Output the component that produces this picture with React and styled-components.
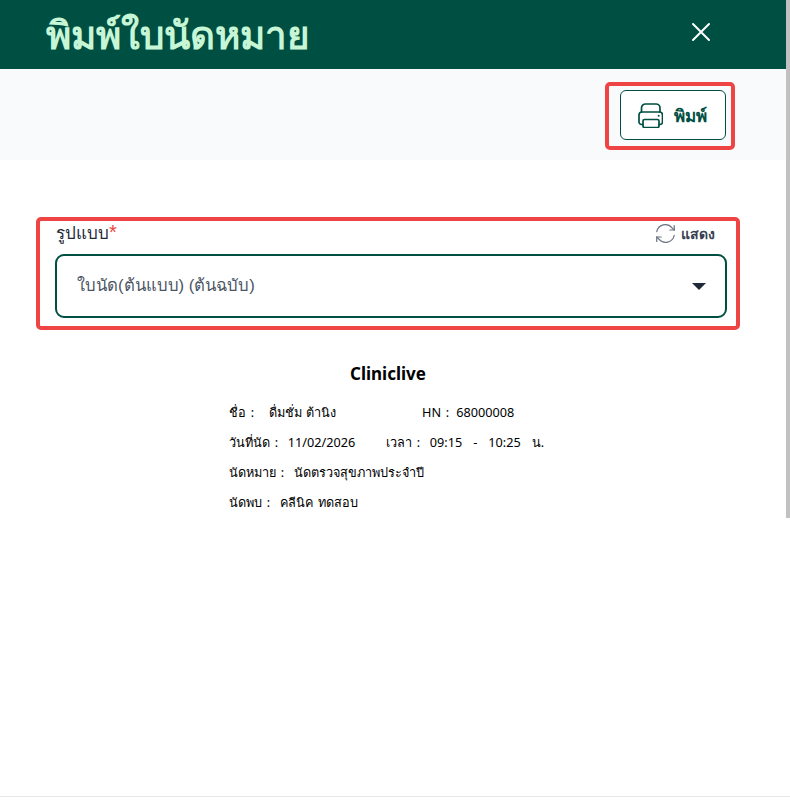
import React from "react";
import styled, { createGlobalStyle } from "styled-components";

const Global = createGlobalStyle`
  html, body { margin: 0; padding: 0; background: #fff; overflow: hidden; }
  body { font-family: "Noto Sans", "Liberation Sans", sans-serif; }
  * { box-sizing: border-box; }
`;
const Page = styled.div`
  position: relative;
  width: 790px;
  height: 805px;
  display: flex;
  flex-direction: column;
  background: #fff;
  overflow: hidden;
`;
const Scrollbar = styled.div`
  position: absolute;
  top: 0;
  right: 0;
  width: 4px;
  height: 518px;
  background: #c1c1c1;
  z-index: 2;
`;
const Header = styled.header`
  height: 69px;
  flex: none;
  background: #004f43;
  display: flex;
  align-items: center;
  justify-content: space-between;
  padding: 0 78px 0 46px;
`;
const Title = styled.h1`
  margin: 3px 0 0;
  font-family: "Liberation Sans", "Noto Sans", sans-serif;
  font-size: 38.5px;
  line-height: 1;
  font-weight: 700;
  color: #c6f6d5;
`;
const CloseBtn = styled.button`
  border: 0;
  background: none;
  padding: 0;
  width: 22px;
  height: 22px;
  margin-top: -5px;
  color: #fff;
  display: flex;
`;
const Toolbar = styled.div`
  height: 91px;
  flex: none;
  background: #f9fafb;
  display: flex;
  align-items: flex-start;
  justify-content: flex-end;
  padding: 13px 55px 0 0;
`;
const Highlight = styled.div`
  border: 4px solid #ef4444;
  border-radius: 5px;
`;
const ButtonFrame = styled(Highlight)`
  width: 130px;
  height: 68px;
  padding: 4px 0 0 11px;
`;
const PrintButton = styled.button`
  width: 106px;
  height: 50px;
  background: #fff;
  border: 1px solid #004f43;
  border-radius: 6px;
  display: flex;
  align-items: center;
  padding: 0 0 0 17px;
  gap: 11px;
  color: #004f43;
  font-family: "Liberation Sans", "Noto Sans", sans-serif;
  font-size: 17px;
  font-weight: 700;
`;
const Content = styled.main`
  flex: 1;
  padding: 57px 50px 0 36px;
  display: flex;
  flex-direction: column;
`;
const FormFrame = styled(Highlight)`
  width: 704px;
  height: 113px;
  padding: 0 9px 0 15px;
`;
const LabelRow = styled.div`
  height: 29px;
  display: flex;
  align-items: center;
  justify-content: space-between;
`;
const Label = styled.label`
  font-family: "Liberation Sans", "Noto Sans", sans-serif;
  font-size: 17px;
  font-weight: 500;
  color: #1f2937;
  margin-top: -6px;
  margin-left: 1px;
`;
const Req = styled.span`
  color: #ef4444;
  font-size: 20px;
  line-height: 1;
`;
const Refresh = styled.button`
  border: 0;
  background: none;
  padding: 0;
  margin: -4px 12px 0 0;
  display: flex;
  align-items: center;
  gap: 5px;
  font-family: "Liberation Sans", "Noto Sans", sans-serif;
  font-size: 14px;
  font-weight: 700;
  color: #374151;
  svg { color: #6b7280; }
`;
const Select = styled.div`
  width: 672px;
  height: 64px;
  margin-top: 4px;
  border: 2px solid #004f43;
  border-radius: 9px;
  display: flex;
  align-items: center;
  justify-content: space-between;
  padding: 0 19px 3px 20px;
  font-family: "Liberation Sans", "Noto Sans", sans-serif;
  font-size: 16.7px;
  color: #4b5563;
`;
const Caret = styled.span`
  width: 0;
  height: 0;
  border-left: 7px solid transparent;
  border-right: 7px solid transparent;
  border-top: 7px solid #1f2937;
  margin-top: 3px;
`;
const Preview = styled.section`
  margin-top: 32px;
  padding-left: 193px;
  color: #000;
`;
const SlipTitle = styled.div`
  width: 318px;
  text-align: center;
  font-size: 17px;
  font-weight: 700;
  font-family: "Noto Sans", sans-serif;
  line-height: 24px;
  margin-bottom: 11px;
`;
const SlipRow = styled.div`
  display: flex;
  height: 30px;
  align-items: center;
  font-family: "Noto Sans", "DejaVu Sans", sans-serif;
  font-size: 12.7px;
  word-spacing: 1.5px;
  white-space: pre;
`;
const Cell = styled.span`
  width: ${p => p.$w}px;
  flex: none;
`;
const Value = styled.span`
  margin-left: 7px;
`;
const TimeDash = styled.span`
  margin: 0 11px;
`;
const TimeUnit = styled.span`
  margin-left: 11px;
`;
const Footer = styled.footer`
  flex: none;
  height: 9px;
  border-top: 1px solid #e5e7eb;
`;

export default function App() {
  return (
    <Page>
      <Global />
      <Scrollbar />
      <Header>
        <Title>พิมพ์ใบนัดหมาย</Title>
        <CloseBtn aria-label="ปิด">
          <svg width="22" height="22" viewBox="0 0 22 22" fill="none" stroke="currentColor" strokeWidth="2" strokeLinecap="round">
            <path d="M3 3 L19 19 M19 3 L3 19" />
          </svg>
        </CloseBtn>
      </Header>
      <Toolbar>
        <ButtonFrame>
          <PrintButton>
            <svg width="25" height="25" viewBox="0 0 25 25" fill="none" stroke="currentColor" strokeWidth="1.7" strokeLinecap="round" strokeLinejoin="round">
              <path d="M3.500 9V5a4 4 0 0 1 4-4h10.500a4 4 0 0 1 4 4v4" />
              <path d="M5 21.500H3.500a2.500 2.500 0 0 1-2.500-2.500v-7a3 3 0 0 1 3-3h17.500a3 3 0 0 1 3 3v7a2.500 2.500 0 0 1-2.500 2.500H21" />
              <rect x="5" y="16.500" width="16" height="8" rx="1.500" />
              <path d="M20.700 12.700h.01" strokeWidth="2" />
            </svg>
            พิมพ์
          </PrintButton>
        </ButtonFrame>
      </Toolbar>
      <Content>
        <FormFrame>
          <LabelRow>
            <Label>รูปแบบ<Req>*</Req></Label>
            <Refresh>
              <svg width="21" height="21" viewBox="0 0 24 24" fill="none" stroke="currentColor" strokeWidth="1.4" strokeLinecap="round" strokeLinejoin="round">
                <path d="M2 10a10 10 0 0 1 17.500-4.500L22 8" />
                <path d="M22 3v5h-5" />
                <path d="M22 14a10 10 0 0 1-17.500 4.500L2 16" />
                <path d="M2 21v-5h5" />
              </svg>
              แสดง
            </Refresh>
          </LabelRow>
          <Select>
            ใบนัด(ต้นแบบ) (ต้นฉบับ)
            <Caret />
          </Select>
        </FormFrame>
        <Preview>
          <SlipTitle>Cliniclive</SlipTitle>
          <SlipRow><Cell $w={193}>ชื่อ :   ดื่มชั่ม ต้านิง</Cell><span>HN :</span><Value>68000008</Value></SlipRow>
          <SlipRow><Cell $w={157}>วันที่นัด :  11/02/2026</Cell><span>เวลา :  09:15</span><TimeDash>-</TimeDash><span>10:25</span><TimeUnit>น.</TimeUnit></SlipRow>
          <SlipRow>นัดหมาย :  นัดตรวจสุขภาพประจำปี</SlipRow>
          <SlipRow>นัดพบ :  คลีนิค ทดสอบ</SlipRow>
        </Preview>
      </Content>
      <Footer />
    </Page>
  );
}
